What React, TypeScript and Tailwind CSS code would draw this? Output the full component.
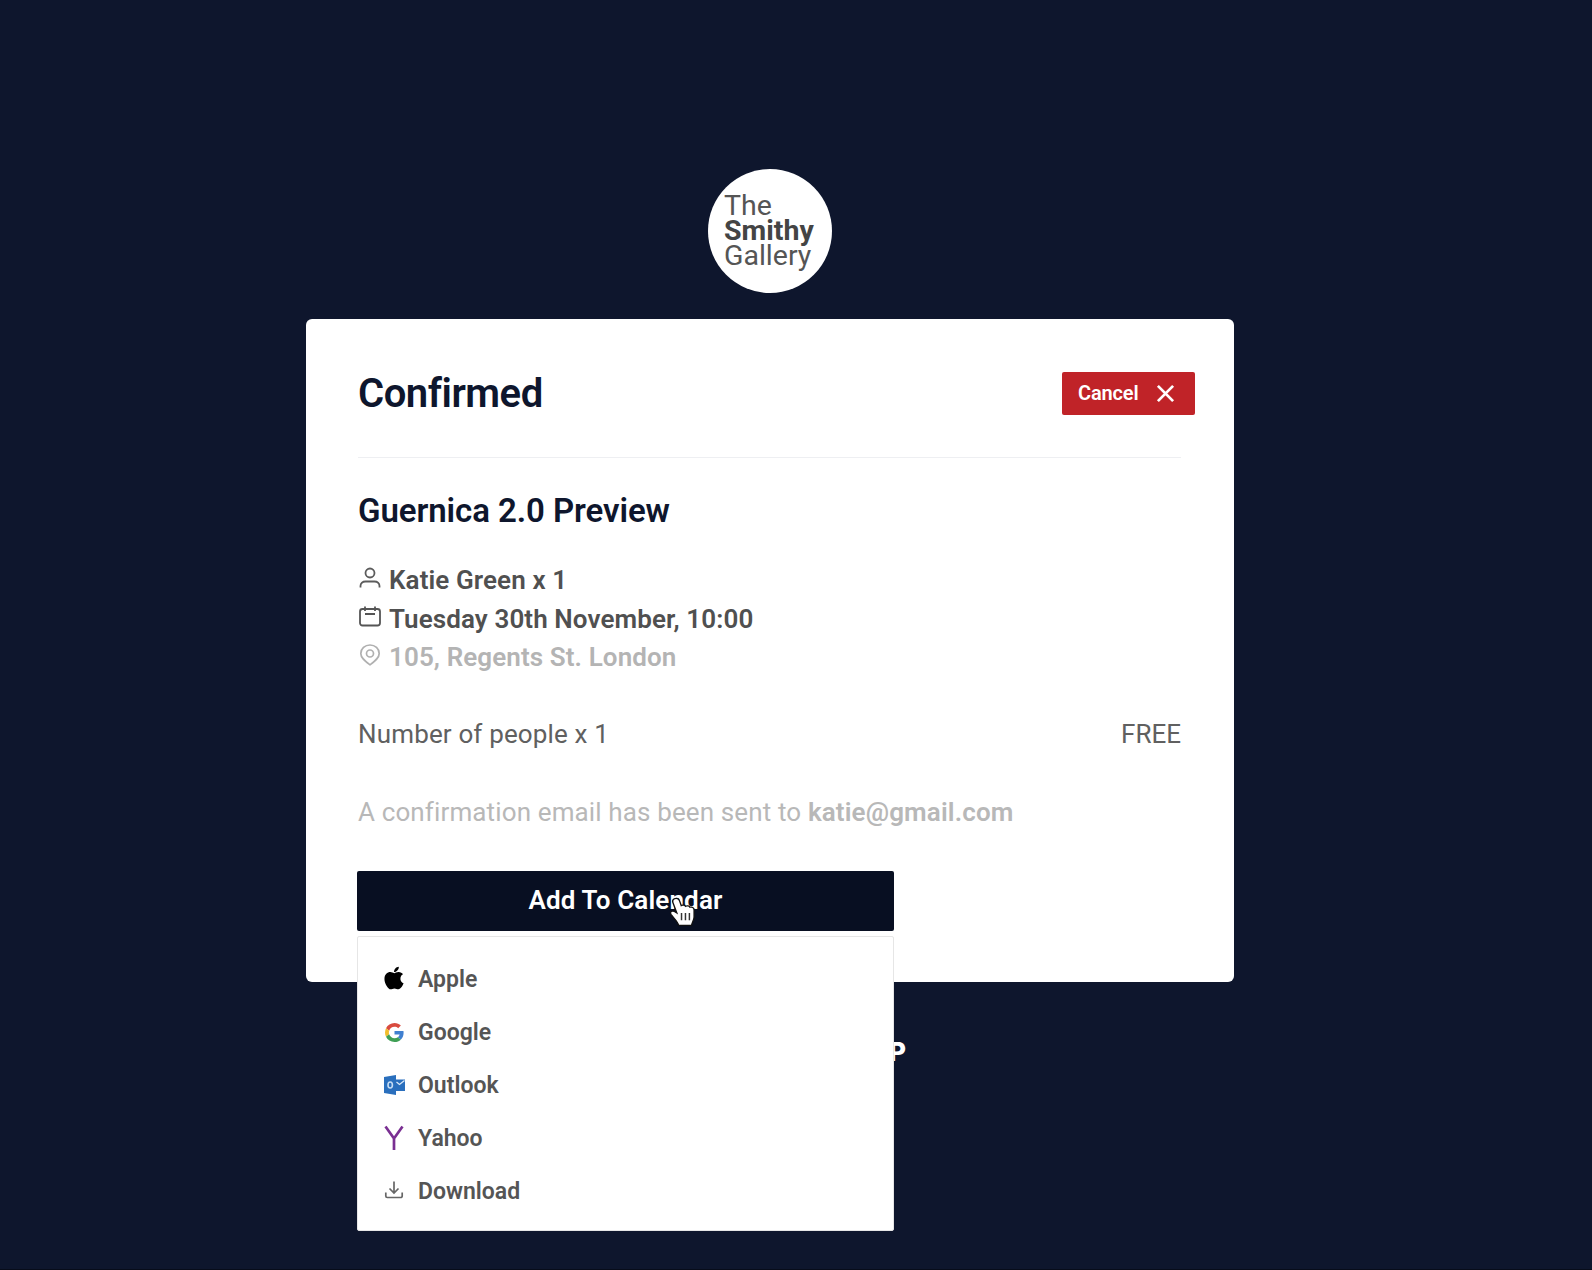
import React from "react";
import { FaApple } from "react-icons/fa";

const GoogleIcon = () => (
  <svg width="19" height="19" viewBox="0 0 48 48">
    <path fill="#d94b3f" d="M24 9.5c3.54 0 6.71 1.22 9.21 3.6l6.85-6.85C35.9 2.38 30.47 0 24 0 14.62 0 6.51 5.38 2.56 13.22l7.98 6.19C12.43 13.72 17.74 9.5 24 9.5z" />
    <path fill="#4080d0" d="M46.98 24.55c0-1.57-.15-3.09-.38-4.55H24v9.02h12.94c-.58 2.96-2.26 5.48-4.78 7.18l7.73 6c4.51-4.18 7.09-10.36 7.09-17.65z" />
    <path fill="#f2bd2b" d="M10.53 28.59A14.5 14.5 0 0 1 9.77 24c0-1.6.27-3.14.76-4.59l-7.98-6.19A23.9 23.9 0 0 0 0 24c0 3.88.92 7.54 2.56 10.78l7.97-6.19z" />
    <path fill="#3f9f55" d="M24 48c6.48 0 11.93-2.13 15.89-5.81l-7.73-6c-2.15 1.45-4.92 2.3-8.16 2.3-6.26 0-11.57-4.22-13.47-9.91l-7.98 6.19C6.51 42.62 14.62 48 24 48z" />
  </svg>
);

const OutlookIcon = () => (
  <svg width="21" height="20" viewBox="0 0 21 20">
    <path fill="#2a6fbd" d="M0 2 12 0v20L0 18zM12 4.500h9v11.500h-9z" />
    <path d="m12.500 7 3 2.500 5-4" fill="none" stroke="#dbe9f8" strokeWidth="1.300" />
    <ellipse cx="6.200" cy="10" rx="2.200" ry="3" fill="none" stroke="#c5dcf3" strokeWidth="1.600" />
  </svg>
);

const YahooIcon = () => (
  <svg width="20" height="26" viewBox="0 0 20 26">
    <path d="M1.500 1.500 10 13.500 18.500 1.500M10 13v12" fill="none" stroke="#7a2f92" strokeWidth="2.700" />
  </svg>
);

const DownloadIcon = () => (
  <svg width="20" height="20" viewBox="0 0 20 20" fill="none" stroke="#666" strokeWidth="1.700">
    <path d="M10 .5v11.500M5.500 7.500l4.500 4.500 4.500-4.500M1.800 11.500V15a1.500 1.500 0 0 0 1.500 1.500h13.400a1.500 1.500 0 0 0 1.500-1.500v-3.500" />
  </svg>
);

const UserIcon = () => (
  <svg width="22" height="24" viewBox="0 0 22 24" fill="none" stroke="#5c5c5c" strokeWidth="1.800">
    <circle cx="11" cy="7" r="4.500" />
    <path d="M1.500 21.500v-1.500c0-2.800 2.200-4.500 5-4.500h9c2.800 0 5 1.700 5 4.500v1.500" />
  </svg>
);

const CalendarIcon = () => (
  <svg width="22" height="24" viewBox="0 0 22 24" fill="none" stroke="#555" strokeWidth="1.800">
    <rect x="1" y="4" width="20" height="16.500" rx="2.500" />
    <path d="M6 1.500V6M16 1.500V6M6 9h10" />
  </svg>
);

const PinIcon = () => (
  <svg width="22" height="24" viewBox="0 0 22 24" fill="none" stroke="#b0b0b0" strokeWidth="1.700">
    <path d="M11 21.800C6 18 1.800 15 1.800 10.500a9.200 8.500 0 0 1 18.400 0c0 4.500-4.200 7.500-9.200 11.300z" />
    <circle cx="11" cy="10.500" r="3.500" />
  </svg>
);

const HandCursor = () => (
  <svg width="32" height="34" viewBox="1 1 26 30" preserveAspectRatio="none">
    <path
      d="M7 3.500c1.800-1.200 3.700 0 4.200 1.800l1.400 4.200c1-.8 2.800-.6 3.500.6 1.200-.8 2.900-.4 3.500.8 1.600-.6 3.400.4 3.400 2.400v6.200c0 3-1.800 4.500-2 7.500H10.500c-.8-3.500-4-6.500-6.300-9.800-1.200-2 .9-3.700 2.800-2.500l2 1.300L5.700 6.500C5.300 5.300 5.900 4.200 7 3.500z"
      fill="#fff"
      stroke="#111"
      strokeWidth="1.100"
    />
    <path d="M12.800 16v6.500M16 16v6.500M19.200 16v6.500" stroke="#333" strokeWidth="1.200" />
  </svg>
);

const details = [
  { id: 1, icon: <UserIcon />, text: "Katie Green x 1", style: "text-[#505050]" },
  { id: 2, icon: <CalendarIcon />, text: "Tuesday 30th November, 10:00", style: "text-[#505050] pt-px" },
  { id: 3, icon: <PinIcon />, text: "105, Regents St. London", style: "text-[#b4b4b4]" },
];

const calendars = [
  { id: 1, icon: <FaApple size={26} color="#000" className="-mt-[3px]" />, name: "Apple" },
  { id: 2, icon: <GoogleIcon />, name: "Google" },
  { id: 3, icon: <OutlookIcon />, name: "Outlook" },
  { id: 4, icon: <YahooIcon />, name: "Yahoo" },
  { id: 5, icon: <DownloadIcon />, name: "Download" },
];

const App = () => {
  return (
    <main className="h-[1270px] w-[1592px] overflow-hidden border-b border-[#070c1a] bg-[#0e162d] pl-[306px] pt-[169px] font-['Roboto',sans-serif]">
      <div className="flex w-[928px] flex-col items-center">
        <div className="flex size-[124px] flex-col justify-center rounded-full bg-white pb-0.5 pl-4 text-[28.5px] leading-[25px] text-[#555]">
          <span>The</span>
          <span className="font-bold text-[#444]">Smithy</span>
          <span>Gallery</span>
        </div>

        <section className="mt-[26px] h-[663px] w-full rounded-md bg-white pl-[52px] pr-[53px] pt-[52px]">
          <div className="-mr-[14px] flex h-[45px] items-center justify-between">
            <h1 className="text-[40px] font-semibold tracking-[-0.47px] text-[#0e162d]">Confirmed</h1>
            <button className="flex h-[43px] w-[133px] items-center justify-between rounded-xs bg-[#c02328] pl-4 pr-[20px] text-[20px] font-semibold tracking-[-0.15px] text-white">
              <span className="mb-[2px]">Cancel</span>
              <svg width="19" height="19" viewBox="0 0 20 20">
                <path d="m2 2 16 16M18 2 2 18" stroke="#fff" strokeWidth="2.900" />
              </svg>
            </button>
          </div>
          <hr className="mt-[41px] border-[#eeeff2]" />

          <h2 className="mt-[33px] text-[33px] font-semibold leading-[40px] tracking-[-0.08px] text-[#0e162d]">
            Guernica 2.0 Preview
          </h2>
          <ul className="mt-[30px] text-[26px] font-semibold tracking-[0.1px]">
            {details.map((item) => (
              <li key={item.id} className="flex h-[38.5px] items-center">
                <span className="mb-[4px] ml-px mr-[8px]">{item.icon}</span>
                <span className={item.style}>{item.text}</span>
              </li>
            ))}
          </ul>
          <div className="mt-[39px] flex h-[38px] items-center justify-between text-[26px] text-[#606060]">
            <span className="tracking-[0.15px]">Number of people x 1</span>
            <span>FREE</span>
          </div>
          <p className="mt-[39px] h-[38px] text-[26px] leading-[38px] tracking-[0.13px] text-[#b8b8b8]">
            A confirmation email has been sent to <b className="font-semibold">katie@gmail.com</b>
          </p>

          <div className="relative -ml-px mt-[40px] w-[537px]">
            <button className="h-[60px] w-full rounded-xs bg-[#080f22] text-[26px] font-semibold tracking-[0.15px] text-white">
              Add To Calendar
            </button>
            <div className="absolute left-[310px] top-[25px]">
              <HandCursor />
            </div>
            <ul className="absolute left-0 top-[65px] h-[295px] w-full rounded-xs border border-[#e6e6e6] bg-white pl-[24px] pt-[16px] text-[23px] font-semibold text-[#555]">
              {calendars.map((item) => (
                <li key={item.id} className="flex h-[53px] items-center">
                  <span className="mr-[12px] flex w-[24px] justify-center">{item.icon}</span>
                  <span className="pt-[2px]">{item.name}</span>
                </li>
              ))}
            </ul>
          </div>
        </section>

        <div className="mt-[54px] w-full pl-[583px] font-['Inter',sans-serif] text-[26px] font-extrabold leading-[32px] text-white">
          P
        </div>
      </div>
    </main>
  );
};

export default App;
